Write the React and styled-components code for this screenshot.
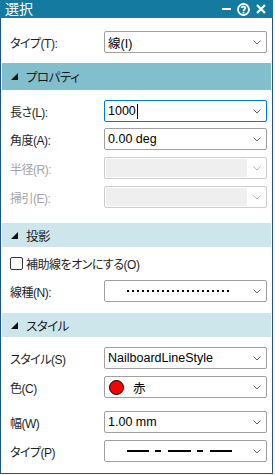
import React from "react";
import styled, { createGlobalStyle, css } from "styled-components";

const GlobalStyle = createGlobalStyle`
  html, body {
    margin: 0;
    padding: 0;
    background: #ffffff;
  }
  body {
    font-family: "Liberation Sans", "Noto Sans CJK JP", sans-serif;
    font-feature-settings: "palt";
  }
`

const Window = styled.div`
  width: 273px;
  height: 474px;
  box-sizing: border-box;
  border: 1px solid #1f5585;
  border-top: none;
  background: #ffffff;
  display: flex;
  flex-direction: column;
`

const TitleBar = styled.div`
  height: 18px;
  margin: 0 -1px;
  background: #157a9f;
  display: flex;
  align-items: center;
  padding: 0 7px 0 5px;
  color: #ffffff;
`

const Title = styled.div`
  flex: 1;
  font-size: 14px;
  line-height: 18px;
`

const TitleButtons = styled.div`
  display: flex;
  align-items: center;
  gap: 5px;
`

const Content = styled.div`
  display: flex;
  flex-direction: column;
  padding: 0 0 0 1px;
`

const Row = styled.div`
  display: flex;
  align-items: center;
  height: 22px;
  margin-top: ${props => props.$mt}px;
  padding-left: 8px;
`

const Label = styled.div`
  width: 94px;
  font-size: 12px;
  letter-spacing: -0.5px;
  color: ${props => props.$disabled ? "#a3a3a3" : "#1e1e1e"};
  white-space: nowrap;
`

const Select = styled.div`
  width: 163px;
  height: 22px;
  box-sizing: border-box;
  border: 1px solid ${props => props.$focus ? "#0078d7" : props.$disabled ? "#cccccc" : "#a0a0a0"};
  border-radius: 2px;
  display: flex;
  align-items: center;
  padding: 0 5px 0 3px;
  background: #ffffff;
  font-size: 12.5px;
  color: #000000;
  ${props => props.$disabled && css`
    padding: 1px 5px 1px 1px;
  `}
`

const SelectValue = styled.div`
  flex: 1;
  display: flex;
  align-items: center;
  height: 100%;
  white-space: nowrap;
  justify-content: ${props => props.$center ? "center" : "flex-start"};
`

const DisabledFill = styled.div`
  flex: 1;
  height: 100%;
  background: #efefef;
  margin-right: 6px;
`

const Caret = styled.span`
  display: inline-block;
  width: 1px;
  height: 15px;
  background: #000000;
  margin-left: 1px;
`

const Section = styled.div`
  height: ${props => props.$h}px;
  margin-top: ${props => props.$mt}px;
  margin-right: 1px;
  background: ${props => props.$active ? "#80bfcb" : "#cde6ec"};
  display: flex;
  align-items: center;
  padding-left: 9px;
  font-size: 12.5px;
  letter-spacing: -0.5px;
  color: #1a1a1a;
`

const SectionText = styled.span`
  margin-left: 8px;
`

const CheckRow = styled.label`
  display: flex;
  align-items: center;
  height: 15px;
  margin-top: ${props => props.$mt}px;
  padding-left: 8px;
  font-size: 12px;
  letter-spacing: -0.5px;
  color: #1e1e1e;
`

const CheckBox = styled.span`
  width: 13px;
  height: 13px;
  box-sizing: border-box;
  border: 1px solid #333333;
  border-radius: 2px;
  margin-right: 3px;
`

const ColorDot = styled.span`
  width: 13px;
  height: 13px;
  border-radius: 50%;
  background: #ff0000;
  border: 1px solid #000000;
  margin: 0 9px 0 1px;
`

const Chevron = ({ light }) => (
  <svg width="8" height="5" viewBox="0 0 8 5">
    <polyline points="0.5,0.5 4,4 7.5,0.5" fill="none" stroke={light ? "#b5b5b5" : "#666666"} strokeWidth="1" />
  </svg>
)

const Triangle = () => (
  <svg width="7" height="7" viewBox="0 0 7 7">
    <polygon points="7,0 7,7 0,7" fill="#111111" />
  </svg>
)

const Dropdown = ({ focus, disabled, center, children }) => (
  <Select $focus={focus} $disabled={disabled}>
    {disabled ? <DisabledFill /> : <SelectValue $center={center}>{children}</SelectValue>}
    <Chevron light={disabled} />
  </Select>
)

const FieldRow = ({ label, mt, disabled, focus, center, children }) => (
  <Row $mt={mt}>
    <Label $disabled={disabled}>{label}</Label>
    <Dropdown focus={focus} disabled={disabled} center={center}>{children}</Dropdown>
  </Row>
)

const DottedLine = () => (
  <svg width="104" height="4" viewBox="0 0 104 4" style={{ marginRight: 4 }}>
    <line x1="0" y1="2" x2="104" y2="2" stroke="#000" strokeWidth="2" strokeDasharray="2 3" />
  </svg>
)

const DashLine = () => (
  <svg width="105" height="4" viewBox="0 0 105 4" style={{ marginRight: 2 }}>
    <g stroke="#000" strokeWidth="2">
      <line x1="0" y1="2" x2="22" y2="2" />
      <line x1="28" y1="2" x2="34" y2="2" />
      <line x1="41" y1="2" x2="64" y2="2" />
      <line x1="70" y1="2" x2="76" y2="2" />
      <line x1="83" y1="2" x2="105" y2="2" />
    </g>
  </svg>
)

export default function App() {
  return (
    <>
      <GlobalStyle />
      <Window>
        <TitleBar>
          <Title>選択</Title>
          <TitleButtons>
            <svg width="10" height="10" viewBox="0 0 10 10">
              <rect x="0" y="4" width="9" height="2" fill="#fff" />
            </svg>
            <svg width="13" height="13" viewBox="0 0 13 13">
              <circle cx="6.5" cy="6.5" r="5.5" fill="none" stroke="#fff" strokeWidth="1.8" />
              <path d="M4.6 5.1 C4.6 3.2 8.4 3.2 8.4 5.1 C8.4 6.4 6.5 6.5 6.5 7.9" fill="none" stroke="#fff" strokeWidth="1.7" />
              <rect x="5.6" y="8.7" width="1.8" height="1.8" fill="#fff" />
            </svg>
            <svg width="10" height="10" viewBox="0 0 10 10" style={{ marginLeft: 1 }}>
              <path d="M1 1 L9 9 M9 1 L1 9" stroke="#fff" strokeWidth="2.2" />
            </svg>
          </TitleButtons>
        </TitleBar>
        <Content>
          <FieldRow label="タイプ(T):" mt={13}>線(I)</FieldRow>

          <Section $active $h={27} $mt={10}><Triangle /><SectionText>プロパティ</SectionText></Section>
          <FieldRow label="長さ(L):" mt={10} focus>1000<Caret /></FieldRow>
          <FieldRow label="角度(A):" mt={6}>0.00 deg</FieldRow>
          <FieldRow label="半径(R):" mt={7} disabled />
          <FieldRow label="掃引(E):" mt={7} disabled />

          <Section $h={24} $mt={15}><Triangle /><SectionText>投影</SectionText></Section>
          <CheckRow $mt={9}><CheckBox />補助線をオンにする(O)</CheckRow>
          <FieldRow label="線種(N):" mt={9} center><DottedLine /></FieldRow>

          <Section $h={24} $mt={11}><Triangle /><SectionText>スタイル</SectionText></Section>
          <FieldRow label="スタイル(S)" mt={10}>NailboardLineStyle</FieldRow>
          <FieldRow label="色(C)" mt={7}><ColorDot />赤</FieldRow>
          <FieldRow label="幅(W)" mt={13}>1.00 mm</FieldRow>
          <FieldRow label="タイプ(P)" mt={7} center><DashLine /></FieldRow>
        </Content>
      </Window>
    </>
  )
}
